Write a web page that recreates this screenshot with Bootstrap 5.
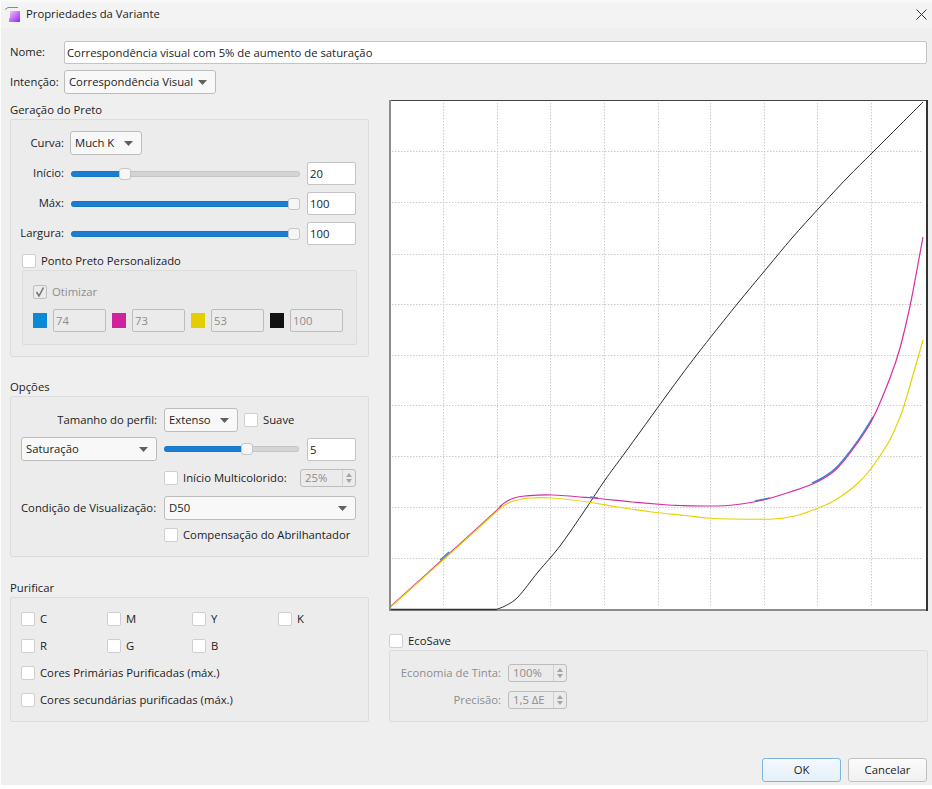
<!DOCTYPE html>
<html lang="pt">
<head>
    <meta charset="UTF-8">
    <title>Propriedades da Variante</title>
    <link rel="stylesheet" href="https://cdn.jsdelivr.net/npm/bootstrap@5.3.3/dist/css/bootstrap.min.css">
    <style>
        body { background: #fff; font-family: "Open Sans", "Liberation Sans", sans-serif; font-size: 11.3px; color: #1c1c1c; overflow: hidden; }
        .dlg { width: 931px; height: 785px; margin-left: 1px; background: #efefef; }
        .dlg-title { height: 28px; padding: 1px 5px 0 4px; background: linear-gradient(#fafafa 0, #f3f3f3 4px); }
        .title-ico { margin-right: 6px; }
        .dlg-body { padding: 13px 5px 0 9px; }
        .lbl-name { width: 55px; flex: none; }
        .lbl-curve { width: 59px; flex: none; text-align: right; padding-right: 6px; }
        .group-title { height: 19px; line-height: 19px; }
        .group-box { background: #ececec; border: 1px solid #dcdcdc; border-radius: 2px; }
        .group-inner { background: #e9e9e9; border: 1px solid #dcdcdc; border-radius: 2px; margin-left: 11px; width: 335px; height: 75px; padding: 14px 10px 0 10px; }
        .col-left { width: 359px; flex: none; }
        .col-right { width: 539px; flex: none; margin-left: 20px; }
        .gap-intent { margin-top: 6px; }
        .box-black { height: 238px; }
        .box-opts { height: 161px; padding: 11px 12px 0 10px; margin-bottom: 21px; }
        .box-pure { height: 125px; padding: 14px 0 0 10px; }
        .title-opts { margin-top: 20px; }

        .dlg .form-control { font-size: 11.3px; color: inherit; height: 23px; min-height: 0; padding: 0 2px; border: 1px solid #c4c4c4; border-radius: 2px; background-color: #fff; box-shadow: none; }
        .dlg .form-control:disabled { background: #ebebeb; color: #8d8d8d; border-color: #bdbdbd; }
        .dlg .form-select { font-size: 11.3px; color: inherit; height: 24px; padding: 0 18px 0 4px; border: 1px solid #bcbcbc; border-radius: 3px; background-color: #f8f8f8; background-position: right 8px center; background-size: 9px 5px; background-image: url("data:image/svg+xml,%3Csvg xmlns='http://www.w3.org/2000/svg' viewBox='0 0 9 5'%3E%3Cpath d='M0 0h9L4.5 5z' fill='%23606060'/%3E%3C/svg%3E"); box-shadow: none; flex: none; }
        .sel-intent { width: 152px; }
        .sel-curve { width: 72px; }
        .sel-size { width: 74px; }
        .sel-sat { width: 136px; }
        .sel-view { width: 192px; }
        .dlg .form-check-input { width: 14px; height: 14px; margin: 0; flex: none; border: 1px solid #cfcfcf; border-radius: 2px; background-color: #fff; box-shadow: none; }
        .dlg .form-check-input:disabled { opacity: 1; background-color: #ebebeb; border-color: #c0c0c0; }
        .chk-row { display: flex; align-items: center; gap: 5px; line-height: 14px; height: 14px; }
        .chk-off { color: #8d8d8d; }
        .chk-tick { position: relative; }
        .chk-tick svg { position: absolute; left: 1px; top: 1px; }
        .chk-custom { margin: 9px 0 2px 11px; }
        .chk-suave { margin-left: 6px; }
        .chk-multi { width: 136px; }
        .chk-optical { margin-top: 8px; padding-left: 143px; }
        .chk-eco { margin-top: 23px; }

        .form-range.slider-var { height: 12px; padding: 0; display: block; flex: none; }
        .slider-var::-webkit-slider-runnable-track { height: 6px; border-radius: 3px; background: linear-gradient(to right, #1a7fd2 var(--val), #d4d4d4 var(--val)); box-shadow: inset 0 0 0 1px rgba(0,0,0,.07); }
        .slider-var::-webkit-slider-thumb { width: 12px; height: 12px; margin-top: -3px; border-radius: 3px; background: #f6f6f6; border: 1px solid #c6c6c6; box-shadow: none; }

        .row-curve { height: 24px; margin-top: 11px; }
        .row-slider { height: 23px; margin-top: 7px; }
        .row-slider .form-range { width: 229px; margin: 0 7px 0 1px; }
        .num-input { width: 49px; flex: none; }
        .sat-range { width: 135px; margin: 0 8px 0 7px; }
        .row-sat { margin-top: 5px; }
        .row-multi { margin-top: 8px; padding-left: 143px; }
        .row-view { margin-top: 9px; }
        .opt-lbl { width: 143px; flex: none; }
        .opt-lbl-end { text-align: right; padding-right: 7px; }

        .row-inks { margin-top: 10px; }
        .swatch { width: 14px; height: 15px; flex: none; margin-left: 6px; }
        .swatch:first-child { margin-left: 0; }
        .sw-c { background: #0a8ad6; }
        .sw-m { background: #d1219b; }
        .sw-y { background: #e3cf00; }
        .sw-k { background: #111; }
        .dlg .ink-input { width: 53px; flex: none; margin-left: 6px; }

        .spin { display: flex; height: 18px; border: 1px solid #bdbdbd; border-radius: 3px; background: #ebebeb; color: #8d8d8d; align-items: center; padding-left: 4px; flex: none; }
        .spin-multi { width: 56px; }
        .spin-eco { width: 59px; }
        .spin-val { flex: 1; }
        .spin-btn { width: 13px; height: 100%; border-left: 1px solid #d2d2d2; flex: none; display: flex; flex-direction: column; align-items: center; justify-content: center; gap: 2px; }
        .arrow-up { width: 0; height: 0; border: 3px solid transparent; border-top: 0; border-bottom: 4px solid #a4a4a4; }
        .arrow-down { width: 0; height: 0; border: 3px solid transparent; border-bottom: 0; border-top: 4px solid #a4a4a4; }

        .pur-grid { display: grid; grid-template-columns: 86px 85px 86px 80px; row-gap: 13px; }
        .pur-wide { grid-column: 1 / -1; }
        .box-eco { height: 72px; margin-top: 2px; padding-top: 13px; }
        .eco-lbl { width: 118px; flex: none; text-align: right; padding-right: 7px; color: #8d8d8d; }
        .row-eco2 { margin-top: 9px; }
        .dlg-foot { margin-top: 36px; gap: 7px; }
        .dlg-btn { width: 79px; height: 24px; padding: 0; font-size: 11.3px; color: #1c1c1c; border-radius: 3px; background: linear-gradient(#fbfbfb, #f0f0f0); border: 1px solid #c0c0c0; }
        .dlg-btn-main { background: linear-gradient(#f4f9fd, #e4f0f9); border: 1px solid #7db5de; }
        .lbl-name { width: 54px; }
    </style>
</head>
<body>
<div class="dlg">
    <!-- Title bar -->
    <div class="dlg-title d-flex align-items-center">
        <svg class="title-ico" width="15" height="15" viewBox="0 0 15 15">
            <defs><linearGradient id="ic" x1="0" y1="0" x2="1" y2="1"><stop offset="0" stop-color="#f0c8fa"/><stop offset="1" stop-color="#9a1ff0"/></linearGradient></defs>
            <rect x="4" y="4" width="11" height="11" fill="url(#ic)"/>
            <path d="M0 2.5 3 .5H13V3.5H5V11H1.5V3.5Z" fill="#f2f2f2"/>
            <path d="M0 2.5 3 .5H13" stroke="#8b8b8b" fill="none"/>
        </svg>
        <span class="flex-grow-1">Propriedades da Variante</span>
        <svg width="11" height="11" viewBox="0 0 11 11"><path d="M.5 .5 10.5 10.5M10.5 .5 .5 10.5" stroke="#333" fill="none"/></svg>
    </div>

    <div class="dlg-body">
        <div class="d-flex align-items-center">
            <span class="lbl-name">Nome:</span>
            <input class="form-control flex-grow-1" value="Correspondência visual com 5% de aumento de saturação">
        </div>
        <div class="d-flex align-items-center gap-intent">
            <span class="lbl-name">Intenção:</span>
            <select class="form-select sel-intent"><option>Correspondência Visual</option></select>
        </div>

        <div class="d-flex gap-intent">
            <div class="col-left">
                <!-- Black generation -->
                <div class="group-title">Geração do Preto</div>
                <div class="group-box box-black">
                    <div class="d-flex align-items-center row-curve">
                        <span class="lbl-curve">Curva:</span>
                        <select class="form-select sel-curve"><option>Much K</option></select>
                    </div>
                    <div class="d-flex align-items-center row-slider">
                        <span class="lbl-curve">Início:</span>
                        <input type="range" class="form-range slider-var" value="22" style="--val:24%">
                        <input class="form-control num-input" value="20">
                    </div>
                    <div class="d-flex align-items-center row-slider">
                        <span class="lbl-curve">Máx:</span>
                        <input type="range" class="form-range slider-var" value="100" style="--val:100%">
                        <input class="form-control num-input" value="100">
                    </div>
                    <div class="d-flex align-items-center row-slider">
                        <span class="lbl-curve">Largura:</span>
                        <input type="range" class="form-range slider-var" value="100" style="--val:100%">
                        <input class="form-control num-input" value="100">
                    </div>
                    <div class="chk-row chk-custom">
                        <input type="checkbox" class="form-check-input"><span>Ponto Preto Personalizado</span>
                    </div>
                    <div class="group-inner">
                        <div class="chk-row chk-off">
                            <span class="chk-tick d-flex">
                                <input type="checkbox" class="form-check-input" disabled>
                                <svg width="12" height="12" viewBox="0 0 12 12"><path d="M2.5 6 5 10 9.5 1.5" stroke="#777" stroke-width="1.6" fill="none"/></svg>
                            </span>
                            <span>Otimizar</span>
                        </div>
                        <div class="d-flex align-items-center row-inks">
                            <span class="swatch sw-c"></span>
                            <input class="form-control ink-input" value="74" disabled>
                            <span class="swatch sw-m"></span>
                            <input class="form-control ink-input" value="73" disabled>
                            <span class="swatch sw-y"></span>
                            <input class="form-control ink-input" value="53" disabled>
                            <span class="swatch sw-k"></span>
                            <input class="form-control ink-input" value="100" disabled>
                        </div>
                    </div>
                </div>

                <!-- Options -->
                <div class="group-title title-opts">Opções</div>
                <div class="group-box box-opts">
                    <div class="d-flex align-items-center">
                        <span class="opt-lbl opt-lbl-end">Tamanho do perfil:</span>
                        <select class="form-select sel-size"><option>Extenso</option></select>
                        <div class="chk-row chk-suave"><input type="checkbox" class="form-check-input"><span>Suave</span></div>
                    </div>
                    <div class="d-flex align-items-center row-sat">
                        <select class="form-select sel-sat"><option>Saturação</option></select>
                        <input type="range" class="form-range slider-var sat-range" value="63" style="--val:64%">
                        <input class="form-control num-input" value="5">
                    </div>
                    <div class="d-flex align-items-center row-multi">
                        <div class="chk-row chk-multi"><input type="checkbox" class="form-check-input"><span>Início Multicolorido:</span></div>
                        <div class="spin spin-multi"><span class="spin-val">25%</span><span class="spin-btn"><i class="arrow-up"></i><i class="arrow-down"></i></span></div>
                    </div>
                    <div class="d-flex align-items-center row-view">
                        <span class="opt-lbl">Condição de Visualização:</span>
                        <select class="form-select sel-view"><option>D50</option></select>
                    </div>
                    <div class="chk-row chk-optical">
                        <input type="checkbox" class="form-check-input"><span>Compensação do Abrilhantador</span>
                    </div>
                </div>

                <!-- Purify -->
                <div class="group-title">Purificar</div>
                <div class="group-box box-pure">
                    <div class="pur-grid">
                        <div class="chk-row"><input type="checkbox" class="form-check-input"><span>C</span></div>
                        <div class="chk-row"><input type="checkbox" class="form-check-input"><span>M</span></div>
                        <div class="chk-row"><input type="checkbox" class="form-check-input"><span>Y</span></div>
                        <div class="chk-row"><input type="checkbox" class="form-check-input"><span>K</span></div>
                        <div class="chk-row"><input type="checkbox" class="form-check-input"><span>R</span></div>
                        <div class="chk-row"><input type="checkbox" class="form-check-input"><span>G</span></div>
                        <div class="chk-row"><input type="checkbox" class="form-check-input"><span>B</span></div>
                        <div></div>
                        <div class="chk-row pur-wide"><input type="checkbox" class="form-check-input"><span>Cores Primárias Purificadas (máx.)</span></div>
                        <div class="chk-row pur-wide"><input type="checkbox" class="form-check-input"><span>Cores secundárias purificadas (máx.)</span></div>
                    </div>
                </div>
            </div>

            <div class="col-right">
                <!-- Curve chart -->
                <svg class="d-block" width="539" height="511" viewBox="389 100 539 511">
                    <rect x="389" y="100" width="539" height="511" fill="#fff"/>
                    <path d="M443.5 103V607M497.5 103V607M550.5 103V607M604.5 103V607M658.5 103V607M710.5 103V607M764.5 103V607M817.5 103V607M871.5 103V607" stroke="#cdcdcd" stroke-dasharray="1.5 1.5" fill="none"/>
                    <path d="M392 151.5H923M392 202.5H923M392 254.5H923M392 304.5H923M392 355.5H923M392 405.5H923M392 456.5H923M392 507.5H923M392 558.5H923" stroke="#cdcdcd" stroke-dasharray="1.5 1.5" fill="none"/>
                    <path class="curve" fill="none" stroke="#2a2a2a" stroke-width="1" data-pts="497,609 505,606 518,597 538,572 560,546 585,510 605,480 627,450 680,377 710,338 738,303 767,268 792,238 820,207 847,178 872,153 900,125 923,102"/>
                    <path class="curve" fill="none" stroke="#2b8fd8" stroke-width="1.4" data-pts="440,560 449,552"/>
                    <path class="curve" fill="none" stroke="#2b8fd8" stroke-width="1.4" data-pts="590,497 598,498"/>
                    <path class="curve" fill="none" stroke="#2b8fd8" stroke-width="1.6" data-pts="755,501 770,498"/>
                    <path class="curve" fill="none" stroke="#2b8fd8" stroke-width="1.6" data-pts="812,483 822,478 837,467 857,442 873,417"/>
                    <path class="curve" fill="none" stroke="#d62ea5" stroke-width="1.2" data-pts="390,607 442,560 495,512 500,506.5 505,502.5 514,498 525,496 552,495 592,498 632,502 668,505 680,505.5 713,506 733,505 763,500 790,492 817,482 837,468.5 857,443.5 873,418 890,378 900,348 910,306 918,264 923,237"/>
                    <path class="curve" fill="none" stroke="#e6d200" stroke-width="1.2" data-pts="390,607.5 442,561 495,513 503,506 512,501.5 522,499 532,498 552,498 588,502 618,507 652,512 685,515.5 707,518 730,519 773,519 795,516 813,510 830,503 843,495 857,484 870,470 887,445 895,429 903,409 913,375 923,340"/>
                    <path d="M389 100.5H928" stroke="#444"/>
                    <path d="M390 100V611" stroke="#8c8c8c" stroke-width="2"/>
                    <path d="M389 610H928" stroke="#8c8c8c" stroke-width="2"/>
                    <path d="M391 609.5H497" stroke="#333" stroke-width="1.4"/>
                    <path d="M927 100V611" stroke="#333" stroke-width="2"/>
                </svg>

                <div class="chk-row chk-eco"><input type="checkbox" class="form-check-input"><span>EcoSave</span></div>
                <div class="group-box box-eco">
                    <div class="d-flex align-items-center">
                        <span class="eco-lbl">Economia de Tinta:</span>
                        <div class="spin spin-eco"><span class="spin-val">100%</span><span class="spin-btn"><i class="arrow-up"></i><i class="arrow-down"></i></span></div>
                    </div>
                    <div class="d-flex align-items-center row-eco2">
                        <span class="eco-lbl">Precisão:</span>
                        <div class="spin spin-eco"><span class="spin-val">1,5 ΔE</span><span class="spin-btn"><i class="arrow-up"></i><i class="arrow-down"></i></span></div>
                    </div>
                </div>
            </div>
        </div>

        <div class="d-flex justify-content-end dlg-foot">
            <button class="btn dlg-btn dlg-btn-main">OK</button>
            <button class="btn dlg-btn">Cancelar</button>
        </div>
    </div>
</div>
<script src="https://cdn.jsdelivr.net/npm/bootstrap@5.3.3/dist/js/bootstrap.bundle.min.js"></script>
<script>
    // catmull-rom through the read-off points, so the curves don't look angular
    document.querySelectorAll(".curve").forEach(el => {
        const p = el.dataset.pts.split(" ").map(s => s.split(",").map(Number));
        let d = `M${p[0][0]} ${p[0][1]}`;
        for (let i = 0; i < p.length - 1; i++) {
            const a = p[Math.max(i - 1, 0)], b = p[i], c = p[i + 1], e = p[Math.min(i + 2, p.length - 1)];
            d += `C${b[0] + (c[0] - a[0]) / 6} ${b[1] + (c[1] - a[1]) / 6} ${c[0] - (e[0] - b[0]) / 6} ${c[1] - (e[1] - b[1]) / 6} ${c[0]} ${c[1]}`;
        }
        el.setAttribute("d", d);
    });
</script>
</body>
</html>
